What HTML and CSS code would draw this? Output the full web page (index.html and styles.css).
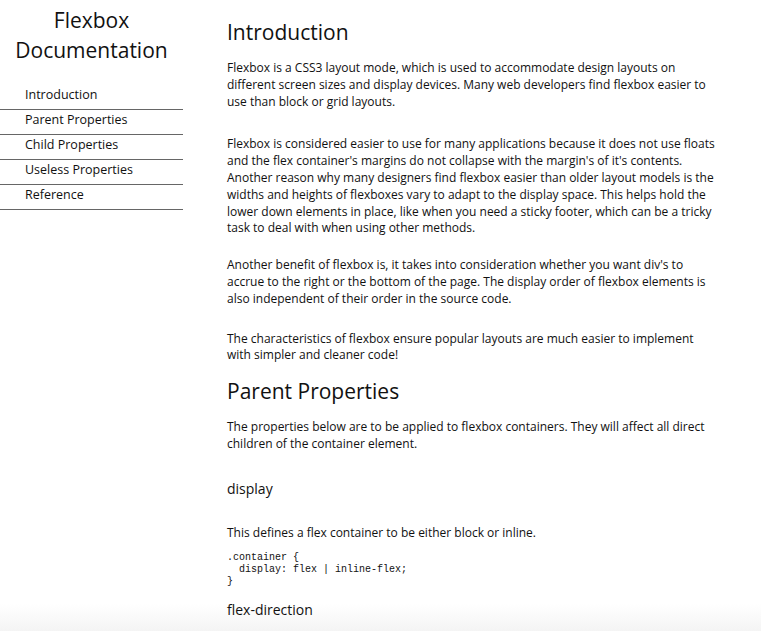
FILE: index.html
```html
<!DOCTYPE html>
<html lang="en">
<head>
  <meta charset="UTF-8">
  <meta name="viewport" content="width=device-width, initial-scale=1.0">
  <title>Flexbox Documentation</title>
  <link rel="stylesheet" href="styles.css">
</head>
<body>
  <nav id="navbar">
    <header>Flexbox Documentation</header>
    <ul>
      <li><a class="nav-link" href="#Introduction">Introduction</a></li>
      <li><a class="nav-link" href="#Parent_Properties">Parent Properties</a></li>
      <li><a class="nav-link" href="#Child_Properties">Child Properties</a></li>
      <li><a class="nav-link" href="#Useless_Properties">Useless Properties</a></li>
      <li><a class="nav-link" href="#Reference">Reference</a></li>
    </ul>
  </nav>
  <main id="main-doc">
    <section class="main-section" id="Introduction">
      <header>Introduction</header>
      <p>Flexbox is a CSS3 layout mode, which is used to accommodate design layouts on different screen sizes and display devices. Many web developers find flexbox easier to use than block or grid layouts.</p>
      <p>Flexbox is considered easier to use for many applications because it does not use floats and the flex container's margins do not collapse with the margin's of it's contents. Another reason why many designers find flexbox easier than older layout models is the widths and heights of flexboxes vary to adapt to the display space. This helps hold the lower down elements in place, like when you need a sticky footer, which can be a tricky task to deal with when using other methods.</p>
      <p>Another benefit of flexbox is, it takes into consideration whether you want div's to accrue to the right or the bottom of the page. The display order of flexbox elements is also independent of their order in the source code.</p>
      <p>The characteristics of flexbox ensure popular layouts are much easier to implement with simpler and cleaner code!</p>
    </section>
    <section class="main-section" id="Parent_Properties">
      <header>Parent Properties</header>
      <p>The properties below are to be applied to flexbox containers. They will affect all direct children of the container element.</p>
      <h3>display</h3>
      <p>This defines a flex container to be either block or inline.</p>
      <code>.container {
  display: flex | inline-flex;
}</code>
      <h3>flex-direction</h3>
    </section>
  </main>
</body>
</html>
```

FILE: styles.css
```css
/* soft grey shade at the bottom of the window, behind the text */
html {
  min-height: 100%;
  background: #fff linear-gradient(rgba(238, 238, 238, 0), #eee) no-repeat left bottom / 100% 42px;
}

body {
  margin: 0;
  font-family: "Open Sans", sans-serif;
  color: #111;
  display: flex;
  align-items: flex-start;
}

#navbar {
  width: 183px;
  flex-shrink: 0;
}

#navbar header {
  font-size: 21px;
  line-height: 30px;
  text-align: center;
  margin: 5px 0 20px;
}

#navbar ul {
  list-style: none;
  margin: 0;
  padding: 0;
}

.nav-link {
  display: block;
  height: 24px;
  line-height: 19px;
  padding-left: 25px;
  font-size: 12.5px;
  color: #111;
  text-decoration: none;
  border-bottom: 1px solid #666;
}

#main-doc {
  flex: none;
  width: 490px;
  padding-left: 44px;
}

.main-section header {
  font-size: 21px;
  line-height: 30px;
  margin: 12px 0 13px;
}

.main-section:first-child header {
  margin-top: 17px;
}

.main-section p {
  font-size: 12px;
  line-height: 1.4;
  margin: 0;
}

.main-section p + p {
  margin-top: 23px;
}

.main-section p:nth-of-type(2) {
  margin-top: 26px;
}

.main-section p:nth-of-type(3) {
  margin-top: 20px;
}

.main-section h3 {
  font-size: 14px;
  font-weight: normal;
  line-height: 20px;
  margin: 26px 0 26px;
}

.main-section code {
  display: block;
  white-space: pre;
  font-family: "Liberation Mono", monospace;
  font-size: 10px;
  line-height: 12px;
  margin-top: 10px;
}

.main-section code + h3 {
  margin-top: 12px;
}
```
